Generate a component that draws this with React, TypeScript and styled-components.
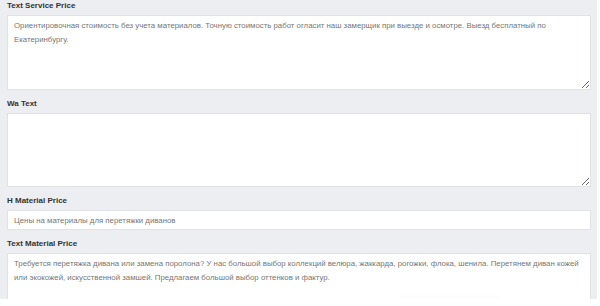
import React from "react";
import styled, { createGlobalStyle } from "styled-components";

const Global = createGlobalStyle`
  html, body { margin: 0; padding: 0; background: #ffffff; }
  body { font-family: "Liberation Sans", Arial, sans-serif; overflow: hidden; }
`;

const Page = styled.div`
  width: 600px;
  height: 306px;
  background: #ffffff;
  position: relative;
`;

const Panel = styled.div`
  width: 597px;
  height: 299px;
  background: #edeef2;
  overflow: hidden;
  box-sizing: border-box;
  padding: 0 6px 0 7px;
`;

const Stack = styled.div`
  display: flex;
  flex-direction: column;
`;

const Field = styled.div`
  display: flex;
  flex-direction: column;
  margin-bottom: 8px;
`;

const Label = styled.label`
  font-family: "Liberation Sans", Arial, sans-serif;
  font-size: 8px;
  font-weight: bold;
  color: #333333;
  line-height: 12px;
  height: 12px;
  margin-bottom: 3px;
`;

const Area = styled.textarea<{ $h: number }>`
  box-sizing: border-box;
  width: 584px;
  height: ${(p) => p.$h}px;
  margin: 0;
  padding: 3px 2px 3px 6px;
  border: 1px solid #e1e2e7;
  border-radius: 0;
  background: #ffffff;
  font-family: "Liberation Sans", Arial, sans-serif;
  font-size: 7.82px;
  line-height: 14px;
  color: #767676;
  resize: vertical;
  outline: none;
  display: block;
`;

const Input = styled.input`
  box-sizing: border-box;
  width: 584px;
  height: 20px;
  margin: 0;
  padding: 0 6px;
  border: 1px solid #e1e2e7;
  background: #ffffff;
  font-family: "Liberation Sans", Arial, sans-serif;
  font-size: 7.82px;
  color: #767676;
  outline: none;
  display: block;
`;

const Shadow = styled.div`
  position: absolute;
  left: 400px;
  top: 296px;
  width: 100px;
  height: 3px;
  background: linear-gradient(to bottom, rgba(0,0,0,0.02), rgba(0,0,0,0));
  filter: blur(1px);
`;

const fields = [
  {
    label: "Text Service Price",
    kind: "area",
    h: 75,
    value:
      "Ориентировочная стоимость без учета материалов. Точную стоимость работ огласит наш замерщик при выезде и осмотре. Выезд бесплатный по Екатеринбургу.",
  },
  { label: "Wa Text", kind: "area", h: 74, value: "" },
  {
    label: "H Material Price",
    kind: "input",
    h: 20,
    value: "Цены на материалы для перетяжки диванов",
  },
  {
    label: "Text Material Price",
    kind: "area",
    h: 75,
    value:
      "Требуется перетяжка дивана или замена поролона? У нас большой выбор коллекций велюра, жаккарда, рогожки, флока, шенила. Перетянем диван кожей или экокожей, искусственной замшей. Предлагаем большой выбор оттенков и фактур.",
  },
];

export default function App() {
  return (
    <Page>
      <Global />
      <Panel>
        <Stack>
          {fields.map((f) => (
            <Field key={f.label}>
              <Label>{f.label}</Label>
              {f.kind === "area" ? (
                <Area $h={f.h} readOnly value={f.value} />
              ) : (
                <Input readOnly value={f.value} />
              )}
            </Field>
          ))}
        </Stack>
      </Panel>
      <Shadow />
    </Page>
  );
}
